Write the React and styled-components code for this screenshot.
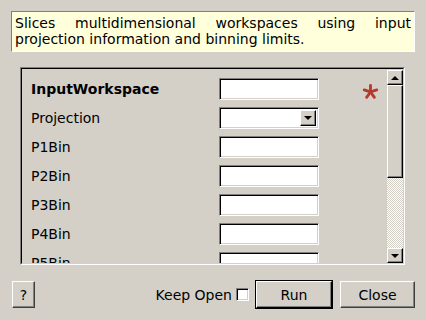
import styled, { createGlobalStyle } from 'styled-components'

const GlobalStyle = createGlobalStyle`
  html, body {
    margin: 0;
    padding: 0;
    background: #d4d0c8;
  }
  * { box-sizing: border-box; }
`

const Dialog = styled.div`
  width: 426px;
  height: 320px;
  background: #d4d0c8;
  font-family: "DejaVu Sans", "Liberation Sans", sans-serif;
  font-size: 14px;
  color: #000;
  display: flex;
  flex-direction: column;
  padding: 11px 11px 0 11px;
`

const Description = styled.div`
  height: 41px;
  background: #ffffdc;
  border-top: 1px solid #808080;
  border-left: 1px solid #808080;
  border-right: 1px solid #fff;
  border-bottom: 1px solid #fff;
  padding: 3px 3px 0 3px;
  line-height: 16px;
  text-align: justify;
  text-align-last: left;
`

const Frame = styled.div`
  margin: 15px 10px 0 9px;
  height: 198px;
  display: flex;
  border-top: 1px solid #808080;
  border-left: 1px solid #808080;
  border-right: 1px solid #fff;
  border-bottom: 1px solid #fff;
`

const FrameInner = styled.div`
  flex: 1;
  display: flex;
  border-top: 1px solid #000;
  border-left: 1px solid #000;
  border-right: 1px solid #d4d0c8;
  border-bottom: 1px solid #d4d0c8;
  overflow: hidden;
`

const Rows = styled.div`
  flex: 1;
  padding: 9px 0 0 9px;
  display: flex;
  flex-direction: column;
  gap: 7px;
  overflow: hidden;
`

const Row = styled.div`
  display: flex;
  align-items: center;
  height: 22px;
  flex-shrink: 0;
`

const Label = styled.div`
  width: 188px;
  font-weight: ${(p) => (p.$bold ? 'bold' : 'normal')};
`

const Field = styled.div`
  width: 100px;
  height: 22px;
  background: #fff;
  border-top: 1px solid #808080;
  border-left: 1px solid #808080;
  border-right: 1px solid #fff;
  border-bottom: 1px solid #fff;
  box-shadow: inset 1px 1px 0 #000, inset -1px -1px 0 #d4d0c8;
  display: flex;
  justify-content: flex-end;
  padding: 2px;
`

const ComboButton = styled.div`
  width: 16px;
  height: 16px;
  background: #d4d0c8;
  border-top: 1px solid #fff;
  border-left: 1px solid #fff;
  border-right: 1px solid #000;
  border-bottom: 1px solid #000;
  box-shadow: inset -1px -1px 0 #808080;
  display: flex;
  align-items: center;
  justify-content: center;
`

const Arrow = styled.div`
  width: 0;
  height: 0;
  border-left: 4px solid transparent;
  border-right: 4px solid transparent;
  ${(p) => (p.$up ? 'border-bottom: 4px solid #000;' : 'border-top: 4px solid #000;')}
`

const Star = styled.svg`
  margin-left: 43px;
  margin-top: 4px;
`

const ScrollBar = styled.div`
  width: 16px;
  display: flex;
  flex-direction: column;
  padding-top: 1px;
`

const ScrollButton = styled.div`
  height: 15px;
  background: #d4d0c8;
  border-top: 1px solid #fff;
  border-left: 1px solid #fff;
  border-right: 1px solid #000;
  border-bottom: 1px solid #000;
  box-shadow: inset -1px -1px 0 #808080;
  display: flex;
  align-items: center;
  justify-content: center;
`

const Handle = styled(ScrollButton)`
  height: 93px;
`

const Track = styled.div`
  flex: 1;
  background-color: #fff;
  background-image: repeating-conic-gradient(#d4d0c8 0 25%, #fff 0 50%);
  background-size: 2px 2px;
`

const Footer = styled.div`
  display: flex;
  align-items: center;
  margin-top: 16px;
  padding-left: 1px;
`

const Button = styled.button`
  font-family: inherit;
  font-size: 14px;
  color: #000;
  height: 27px;
  width: ${(p) => p.$w}px;
  background: #d4d0c8;
  border-top: 1px solid #fff;
  border-left: 1px solid #fff;
  border-right: 1px solid #404040;
  border-bottom: 1px solid #404040;
  box-shadow: inset -1px -1px 0 #808080;
  padding: 0;
  margin-left: ${(p) => p.$ml || 0}px;
  ${(p) =>
    p.$default &&
    `outline: 1px solid #000; outline-offset: 0; border-right-color: #000; border-bottom-color: #000;`}
`

const Spacer = styled.div`
  flex: 1;
`

const CheckLabel = styled.span`
  margin-right: 4px;
`

const CheckBox = styled.div`
  width: 13px;
  height: 13px;
  background: #fff;
  border-top: 1px solid #808080;
  border-left: 1px solid #808080;
  border-right: 1px solid #fff;
  border-bottom: 1px solid #fff;
  box-shadow: inset 1px 1px 0 #000, inset -1px -1px 0 #d4d0c8;
`

const fields = ['P1Bin', 'P2Bin', 'P3Bin', 'P4Bin', 'P5Bin']

const App = () => {
  return (
    <Dialog>
      <GlobalStyle />
      <Description>
        Slices multidimensional workspaces using input projection information and binning limits.
      </Description>
      <Frame>
        <FrameInner>
          <Rows>
            <Row>
              <Label $bold>InputWorkspace</Label>
              <Field />
              <Star width="17" height="17" viewBox="0 0 18 18">
                <g stroke="#b5392c" strokeWidth="3" strokeLinecap="round">
                  {[0, 72, 144, 216, 288].map((a) => (
                    <line key={a} x1="9" y1="9.5" x2="9" y2="2.5" transform={`rotate(${a} 9 9.5)`} />
                  ))}
                </g>
              </Star>
            </Row>
            <Row>
              <Label>Projection</Label>
              <Field>
                <ComboButton>
                  <Arrow />
                </ComboButton>
              </Field>
            </Row>
            {fields.map((f) => (
              <Row key={f}>
                <Label>{f}</Label>
                <Field />
              </Row>
            ))}
          </Rows>
          <ScrollBar>
            <ScrollButton>
              <Arrow $up />
            </ScrollButton>
            <Handle />
            <Track />
            <ScrollButton>
              <Arrow />
            </ScrollButton>
          </ScrollBar>
        </FrameInner>
      </Frame>
      <Footer>
        <Button $w={23}>?</Button>
        <Spacer />
        <CheckLabel>Keep Open</CheckLabel>
        <CheckBox />
        <Button $w={76} $ml={7} $default>Run</Button>
        <Button $w={75} $ml={8}>Close</Button>
      </Footer>
    </Dialog>
  )
}

export default App
